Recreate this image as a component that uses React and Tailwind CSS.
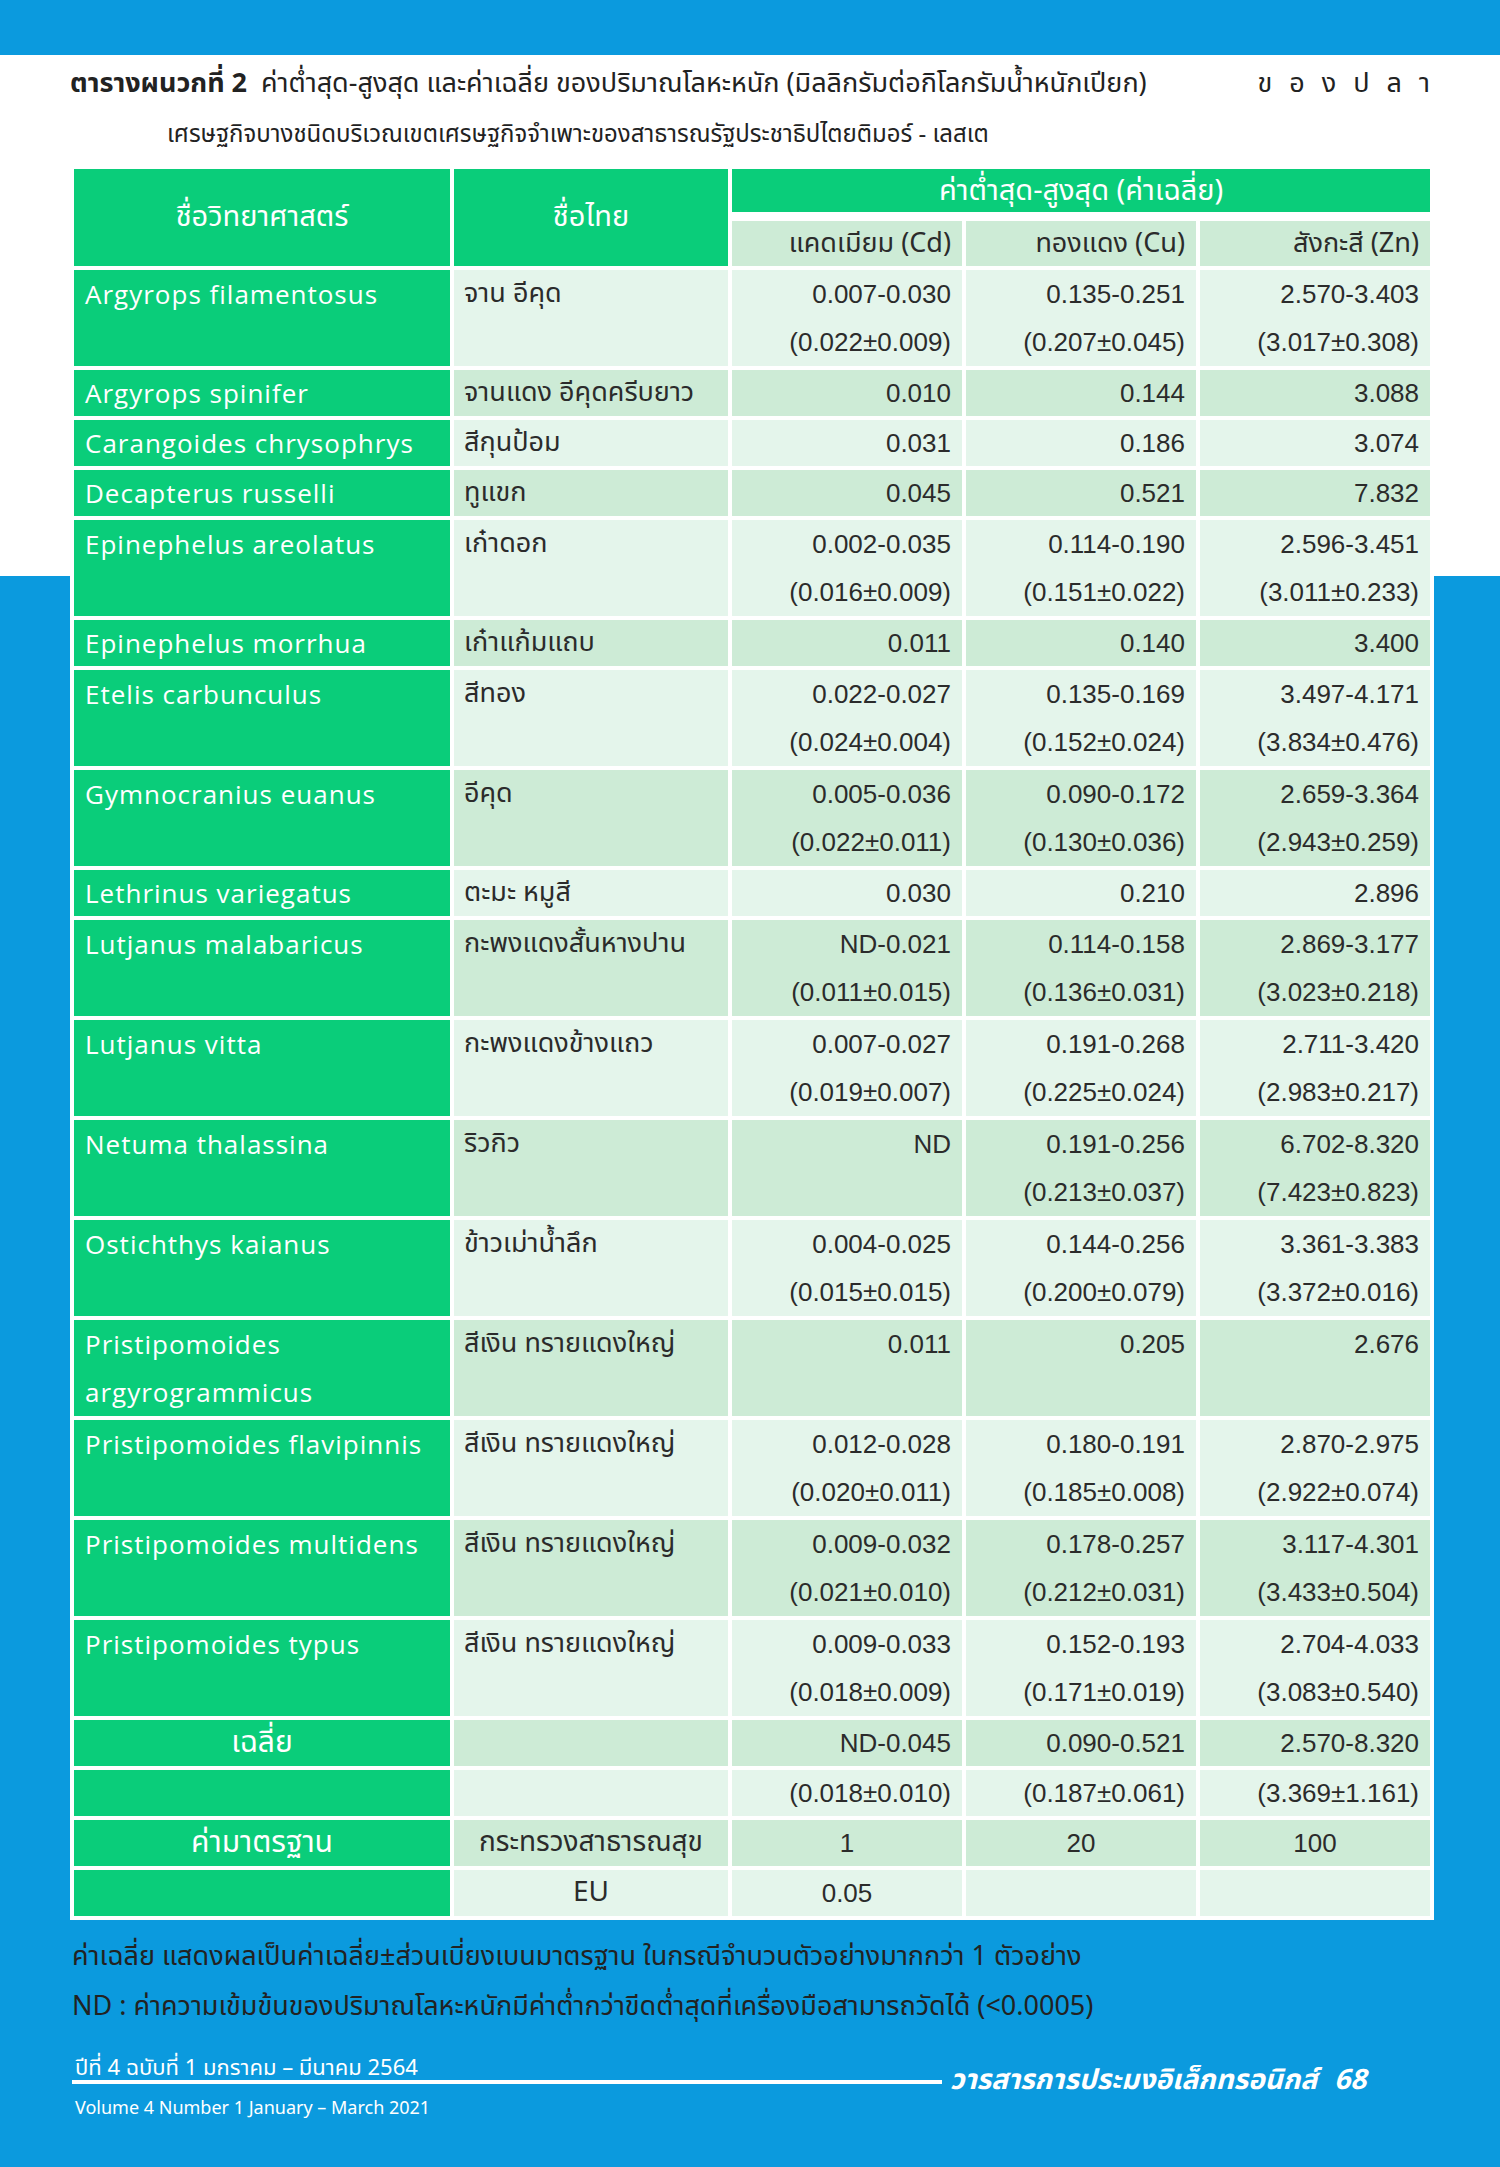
const thai = "font-['Noto_Sans_Thai','Noto_Sans','Liberation_Sans',sans-serif]";
const latin = "font-['Open_Sans','Noto_Sans_Thai',sans-serif]";
const nums = "font-['Liberation_Sans_Narrow','Liberation_Sans','Noto_Sans_Thai',sans-serif]";

const fish = [
  { sci: ["Argyrops filamentosus"], th: "จาน อีคุด", cd: ["0.007-0.030", "(0.022±0.009)"], cu: ["0.135-0.251", "(0.207±0.045)"], zn: ["2.570-3.403", "(3.017±0.308)"] },
  { sci: ["Argyrops spinifer"], th: "จานแดง อีคุดครีบยาว", cd: ["0.010"], cu: ["0.144"], zn: ["3.088"] },
  { sci: ["Carangoides chrysophrys"], th: "สีกุนป้อม", cd: ["0.031"], cu: ["0.186"], zn: ["3.074"] },
  { sci: ["Decapterus russelli"], th: "ทูแขก", cd: ["0.045"], cu: ["0.521"], zn: ["7.832"] },
  { sci: ["Epinephelus areolatus"], th: "เก๋าดอก", cd: ["0.002-0.035", "(0.016±0.009)"], cu: ["0.114-0.190", "(0.151±0.022)"], zn: ["2.596-3.451", "(3.011±0.233)"] },
  { sci: ["Epinephelus morrhua"], th: "เก๋าแก้มแถบ", cd: ["0.011"], cu: ["0.140"], zn: ["3.400"] },
  { sci: ["Etelis carbunculus"], th: "สีทอง", cd: ["0.022-0.027", "(0.024±0.004)"], cu: ["0.135-0.169", "(0.152±0.024)"], zn: ["3.497-4.171", "(3.834±0.476)"] },
  { sci: ["Gymnocranius euanus"], th: "อีคุด", cd: ["0.005-0.036", "(0.022±0.011)"], cu: ["0.090-0.172", "(0.130±0.036)"], zn: ["2.659-3.364", "(2.943±0.259)"] },
  { sci: ["Lethrinus variegatus"], th: "ตะมะ หมูสี", cd: ["0.030"], cu: ["0.210"], zn: ["2.896"] },
  { sci: ["Lutjanus malabaricus"], th: "กะพงแดงสั้นหางปาน", cd: ["ND-0.021", "(0.011±0.015)"], cu: ["0.114-0.158", "(0.136±0.031)"], zn: ["2.869-3.177", "(3.023±0.218)"] },
  { sci: ["Lutjanus vitta"], th: "กะพงแดงข้างแถว", cd: ["0.007-0.027", "(0.019±0.007)"], cu: ["0.191-0.268", "(0.225±0.024)"], zn: ["2.711-3.420", "(2.983±0.217)"] },
  { sci: ["Netuma thalassina"], th: "ริวกิว", cd: ["ND"], cu: ["0.191-0.256", "(0.213±0.037)"], zn: ["6.702-8.320", "(7.423±0.823)"] },
  { sci: ["Ostichthys kaianus"], th: "ข้าวเม่าน้ำลึก", cd: ["0.004-0.025", "(0.015±0.015)"], cu: ["0.144-0.256", "(0.200±0.079)"], zn: ["3.361-3.383", "(3.372±0.016)"] },
  { sci: ["Pristipomoides", "argyrogrammicus"], th: "สีเงิน ทรายแดงใหญ่", cd: ["0.011"], cu: ["0.205"], zn: ["2.676"] },
  { sci: ["Pristipomoides flavipinnis"], th: "สีเงิน ทรายแดงใหญ่", cd: ["0.012-0.028", "(0.020±0.011)"], cu: ["0.180-0.191", "(0.185±0.008)"], zn: ["2.870-2.975", "(2.922±0.074)"] },
  { sci: ["Pristipomoides multidens"], th: "สีเงิน ทรายแดงใหญ่", cd: ["0.009-0.032", "(0.021±0.010)"], cu: ["0.178-0.257", "(0.212±0.031)"], zn: ["3.117-4.301", "(3.433±0.504)"] },
  { sci: ["Pristipomoides typus"], th: "สีเงิน ทรายแดงใหญ่", cd: ["0.009-0.033", "(0.018±0.009)"], cu: ["0.152-0.193", "(0.171±0.019)"], zn: ["2.704-4.033", "(3.083±0.540)"] },
];

const Lines = ({ lines, tall }) => (
  <>
    {lines.map((l, i) => (
      <div key={i} className={tall ? "h-[48px] leading-[48px] whitespace-nowrap" : "h-[46px] leading-[46px] whitespace-nowrap"}>
        {l}
      </div>
    ))}
  </>
);

const FishRow = ({ row, index }) => {
  const tall = row.sci.length > 1 || row.cd.length > 1 || row.cu.length > 1 || row.zn.length > 1;
  const bg = index % 2 === 0 ? "bg-[#e4f5eb]" : "bg-[#cdebd6]";
  return (
    <tr className={tall ? "h-[96px]" : "h-[46px]"}>
      <td className={`bg-[#0acd7a] text-white text-[26px] tracking-[1px] pl-[11px] align-top ${latin}`}>
        <Lines lines={row.sci} tall={tall} />
      </td>
      <td className={`${bg} text-[#2b2b2b] text-[27px] pl-[10px] align-top ${thai}`}>
        <Lines lines={[row.th]} tall={tall} />
      </td>
      {[row.cd, row.cu, row.zn].map((v, i) => (
        <td key={i} className={`${bg} text-[#2b2b2b] text-[26px] pr-[11px] text-right align-top ${nums}`}>
          <Lines lines={v} tall={tall} />
        </td>
      ))}
    </tr>
  );
};

const SummaryRow = ({ label, th, values, light, center }) => {
  const bg = light ? "bg-[#e4f5eb]" : "bg-[#cdebd6]";
  return (
    <tr className="h-[46px]">
      <td className={`bg-[#0acd7a] text-white text-[30px] leading-[46px] text-center align-middle ${thai}`}>{label}</td>
      <td className={`${bg} text-[#2b2b2b] text-[28px] leading-[46px] text-center align-middle ${thai}`}>{th}</td>
      {values.map((v, i) => (
        <td
          key={i}
          className={`${bg} text-[#2b2b2b] text-[26px] leading-[46px] align-middle ${nums} ${center ? "text-center" : "text-right pr-[11px]"}`}
        >
          {v}
        </td>
      ))}
    </tr>
  );
};

const MetalTable = () => {
  return (
    <div className="ml-[70px] w-[1364px] bg-white">
      <table className="border-separate border-spacing-[4px] table-fixed w-full">
        <colgroup>
          <col className="w-[376px]" />
          <col className="w-[274px]" />
          <col className="w-[230px]" />
          <col className="w-[230px]" />
          <col className="w-[230px]" />
        </colgroup>
        <thead>
          <tr>
            <th rowSpan={2} className={`bg-[#0acd7a] text-white text-[29px] font-normal text-center align-middle ${thai}`}>
              ชื่อวิทยาศาสตร์
            </th>
            <th rowSpan={2} className={`bg-[#0acd7a] text-white text-[29px] font-normal text-center align-middle ${thai}`}>
              ชื่อไทย
            </th>
            <th colSpan={3} className={`h-[48px] bg-[#0acd7a] border-b-[5px] border-white text-white text-[29px] leading-[40px] font-normal text-center align-middle ${thai}`}>
              ค่าต่ำสุด-สูงสุด (ค่าเฉลี่ย)
            </th>
          </tr>
          <tr className="h-[45px]">
            {["แคดเมียม (Cd)", "ทองแดง (Cu)", "สังกะสี (Zn)"].map((t) => (
              <th key={t} className={`bg-[#cdebd6] text-[#2b2b2b] text-[27px] leading-[40px] font-normal text-right pr-[11px] align-middle ${thai}`}>
                {t}
              </th>
            ))}
          </tr>
        </thead>
        <tbody>
          {fish.map((row, i) => (
            <FishRow key={row.sci.join(" ")} row={row} index={i} />
          ))}
          <SummaryRow label="เฉลี่ย" th="" values={["ND-0.045", "0.090-0.521", "2.570-8.320"]} />
          <SummaryRow label="" th="" values={["(0.018±0.010)", "(0.187±0.061)", "(3.369±1.161)"]} light />
          <SummaryRow label="ค่ามาตรฐาน" th="กระทรวงสาธารณสุข" values={["1", "20", "100"]} center />
          <SummaryRow label="" th="EU" values={["0.05", "", ""]} light center />
        </tbody>
      </table>
    </div>
  );
};

export default function App() {
  return (
    <div className="w-[1500px] h-[2167px] overflow-hidden bg-[linear-gradient(to_bottom,#0b9ade_0px,#0b9ade_55px,#ffffff_55px,#ffffff_576px,#0b9ade_576px)]">
      {/* Caption */}
      <div className={`pt-[66px] pl-[70px] pr-[70px] text-[27px] text-[#222] ${thai}`}>
        <div className="flex items-center justify-between leading-[36px]">
          <div className="whitespace-nowrap">
            <span className="font-bold">ตารางผนวกที่ 2</span>
            <span className="ml-[14px]">ค่าต่ำสุด-สูงสุด และค่าเฉลี่ย ของปริมาณโลหะหนัก (มิลลิกรัมต่อกิโลกรัมน้ำหนักเปียก)</span>
          </div>
          <span className="tracking-[5px] mr-[-5px] whitespace-nowrap">ข อ ง ป ล า</span>
        </div>
        <div className="pl-[97px] mt-[15px] text-[24px] leading-[36px] whitespace-nowrap">
          เศรษฐกิจบางชนิดบริเวณเขตเศรษฐกิจจำเพาะของสาธารณรัฐประชาธิปไตยติมอร์ - เลสเต
        </div>
      </div>

      <div className="mt-[12px]">
        <MetalTable />
      </div>

      {/* Notes */}
      <div className={`pl-[72px] mt-[12px] text-[27px] text-[#222] ${thai}`}>
        <div className="leading-[50px] whitespace-nowrap">
          ค่าเฉลี่ย แสดงผลเป็นค่าเฉลี่ย±ส่วนเบี่ยงเบนมาตรฐาน ในกรณีจำนวนตัวอย่างมากกว่า 1 ตัวอย่าง
        </div>
        <div className="leading-[50px] whitespace-nowrap">
          ND : ค่าความเข้มข้นของปริมาณโลหะหนักมีค่าต่ำกว่าขีดต่ำสุดที่เครื่องมือสามารถวัดได้ (&lt;0.0005)
        </div>
      </div>

      {/* Footer */}
      <div className={`mt-[22px] pl-[72px] flex items-end text-white ${thai}`}>
        <div className="w-[870px]">
          <div className="text-[22px] leading-[22px] pl-[3px] whitespace-nowrap">ปีที่ 4 ฉบับที่ 1 มกราคม – มีนาคม 2564</div>
          <div className="h-[4px] bg-white"></div>
        </div>
        <div className="ml-[8px] text-[28px] font-bold italic leading-[30px] translate-y-[12px] whitespace-nowrap">
          วารสารการประมงอิเล็กทรอนิกส์ <span className="ml-[10px]">68</span>
        </div>
      </div>
      <div className={`pl-[75px] mt-[13px] text-white text-[18px] leading-[24px] ${thai}`}>
        Volume 4 Number 1 January – March 2021
      </div>
    </div>
  );
}
